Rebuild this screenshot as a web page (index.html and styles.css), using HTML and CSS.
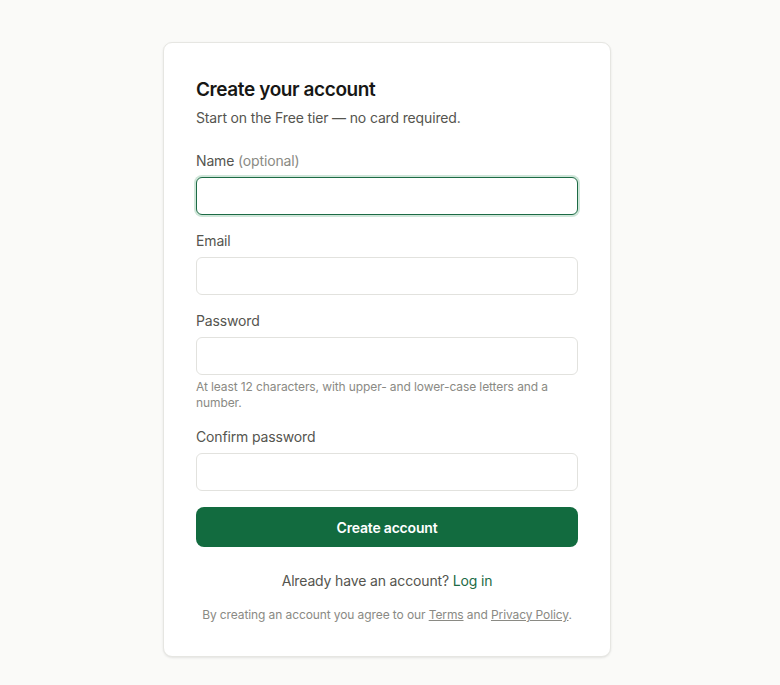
FILE: index.html
```html
<!DOCTYPE html>
<html lang="en">
<head>
<meta charset="utf-8">
<title>Create your account</title>
<link rel="stylesheet" href="styles.css">
</head>
<body>
<main class="page">
  <section class="card">
    <h1 class="title">Create your account</h1>
    <p class="subtitle">Start on the Free tier — no card required.</p>
    <form class="form">
      <div class="field">
        <label class="label" for="name">Name <span class="muted">(optional)</span></label>
        <input class="input input-focus" id="name" type="text">
      </div>
      <div class="field">
        <label class="label" for="email">Email</label>
        <input class="input" id="email" type="email">
      </div>
      <div class="field">
        <label class="label" for="pw">Password</label>
        <input class="input" id="pw" type="password">
        <p class="hint">At least 12 characters, with upper- and lower-case letters and a number.</p>
      </div>
      <div class="field">
        <label class="label" for="pw2">Confirm password</label>
        <input class="input" id="pw2" type="password">
      </div>
      <button class="btn" type="button">Create account</button>
    </form>
    <p class="switch">Already have an account? <a href="#" class="link">Log in</a></p>
    <p class="legal">By creating an account you agree to our <a href="#" class="ulink">Terms</a> and <a href="#" class="ulink">Privacy Policy</a>.</p>
  </section>
</main>
</body>
</html>
```
FILE: styles.css
```css
* { box-sizing: border-box; }
html, body { margin: 0; padding: 0; }
body {
  background: #fafaf8;
  font-family: Inter, "Noto Sans", "Liberation Sans", sans-serif;
  color: #1c1c1a;
}
.page {
  display: flex;
  justify-content: center;
  padding-top: 42px;
  padding-bottom: 28px;
  padding-right: 6px;
}
.card {
  width: 448px;
  background: #ffffff;
  border: 1px solid #e6e6e2;
  border-radius: 9px;
  box-shadow: 0 1px 3px rgba(0,0,0,0.06), 0 1px 2px rgba(0,0,0,0.04);
  padding: 34px 32px 33px;
}
.title {
  margin: 0;
  font-size: 19px;
  line-height: 26px;
  font-weight: 600;
  letter-spacing: -0.4px;
  color: #171715;
}
.subtitle {
  margin: 5px 0 0;
  font-size: 14px;
  line-height: 20px;
  color: #55554f;
  letter-spacing: -0.15px;
}
.form {
  display: flex;
  flex-direction: column;
  margin-top: 23px;
}
.field {
  display: flex;
  flex-direction: column;
  margin-bottom: 16px;
}
.label {
  font-size: 14px;
  line-height: 20px;
  color: #55554f;
  letter-spacing: -0.15px;
  margin-bottom: 6px;
}
.muted { color: #8a8a84; }
.input {
  height: 38px;
  border: 1px solid #e2e2de;
  border-radius: 6px;
  background: #fff;
  font: inherit;
  padding: 0 10px;
  outline: none;
}
.input-focus {
  border: 1.5px solid #1d6b45;
  box-shadow: 0 0 0 2px #cfe6d9;
}
.hint {
  margin: 4px 0 0;
  font-size: 12px;
  line-height: 16px;
  color: #8a8a84;
  letter-spacing: -0.1px;
}
.btn {
  height: 40px;
  border: none;
  border-radius: 8px;
  background: #126b3f;
  color: #fff;
  font: inherit;
  font-size: 14px;
  font-weight: 600;
  letter-spacing: -0.2px;
  margin-top: 0;
}
.switch {
  margin: 24px 0 0;
  text-align: center;
  font-size: 14px;
  line-height: 20px;
  color: #55554f;
  letter-spacing: -0.15px;
}
.link { color: #1d6b45; text-decoration: none; }
.legal {
  margin: 16px 0 0;
  text-align: center;
  font-size: 12px;
  line-height: 16px;
  color: #8a8a84;
  letter-spacing: -0.1px;
}
.ulink { color: #8a8a84; text-decoration: underline; }
```
